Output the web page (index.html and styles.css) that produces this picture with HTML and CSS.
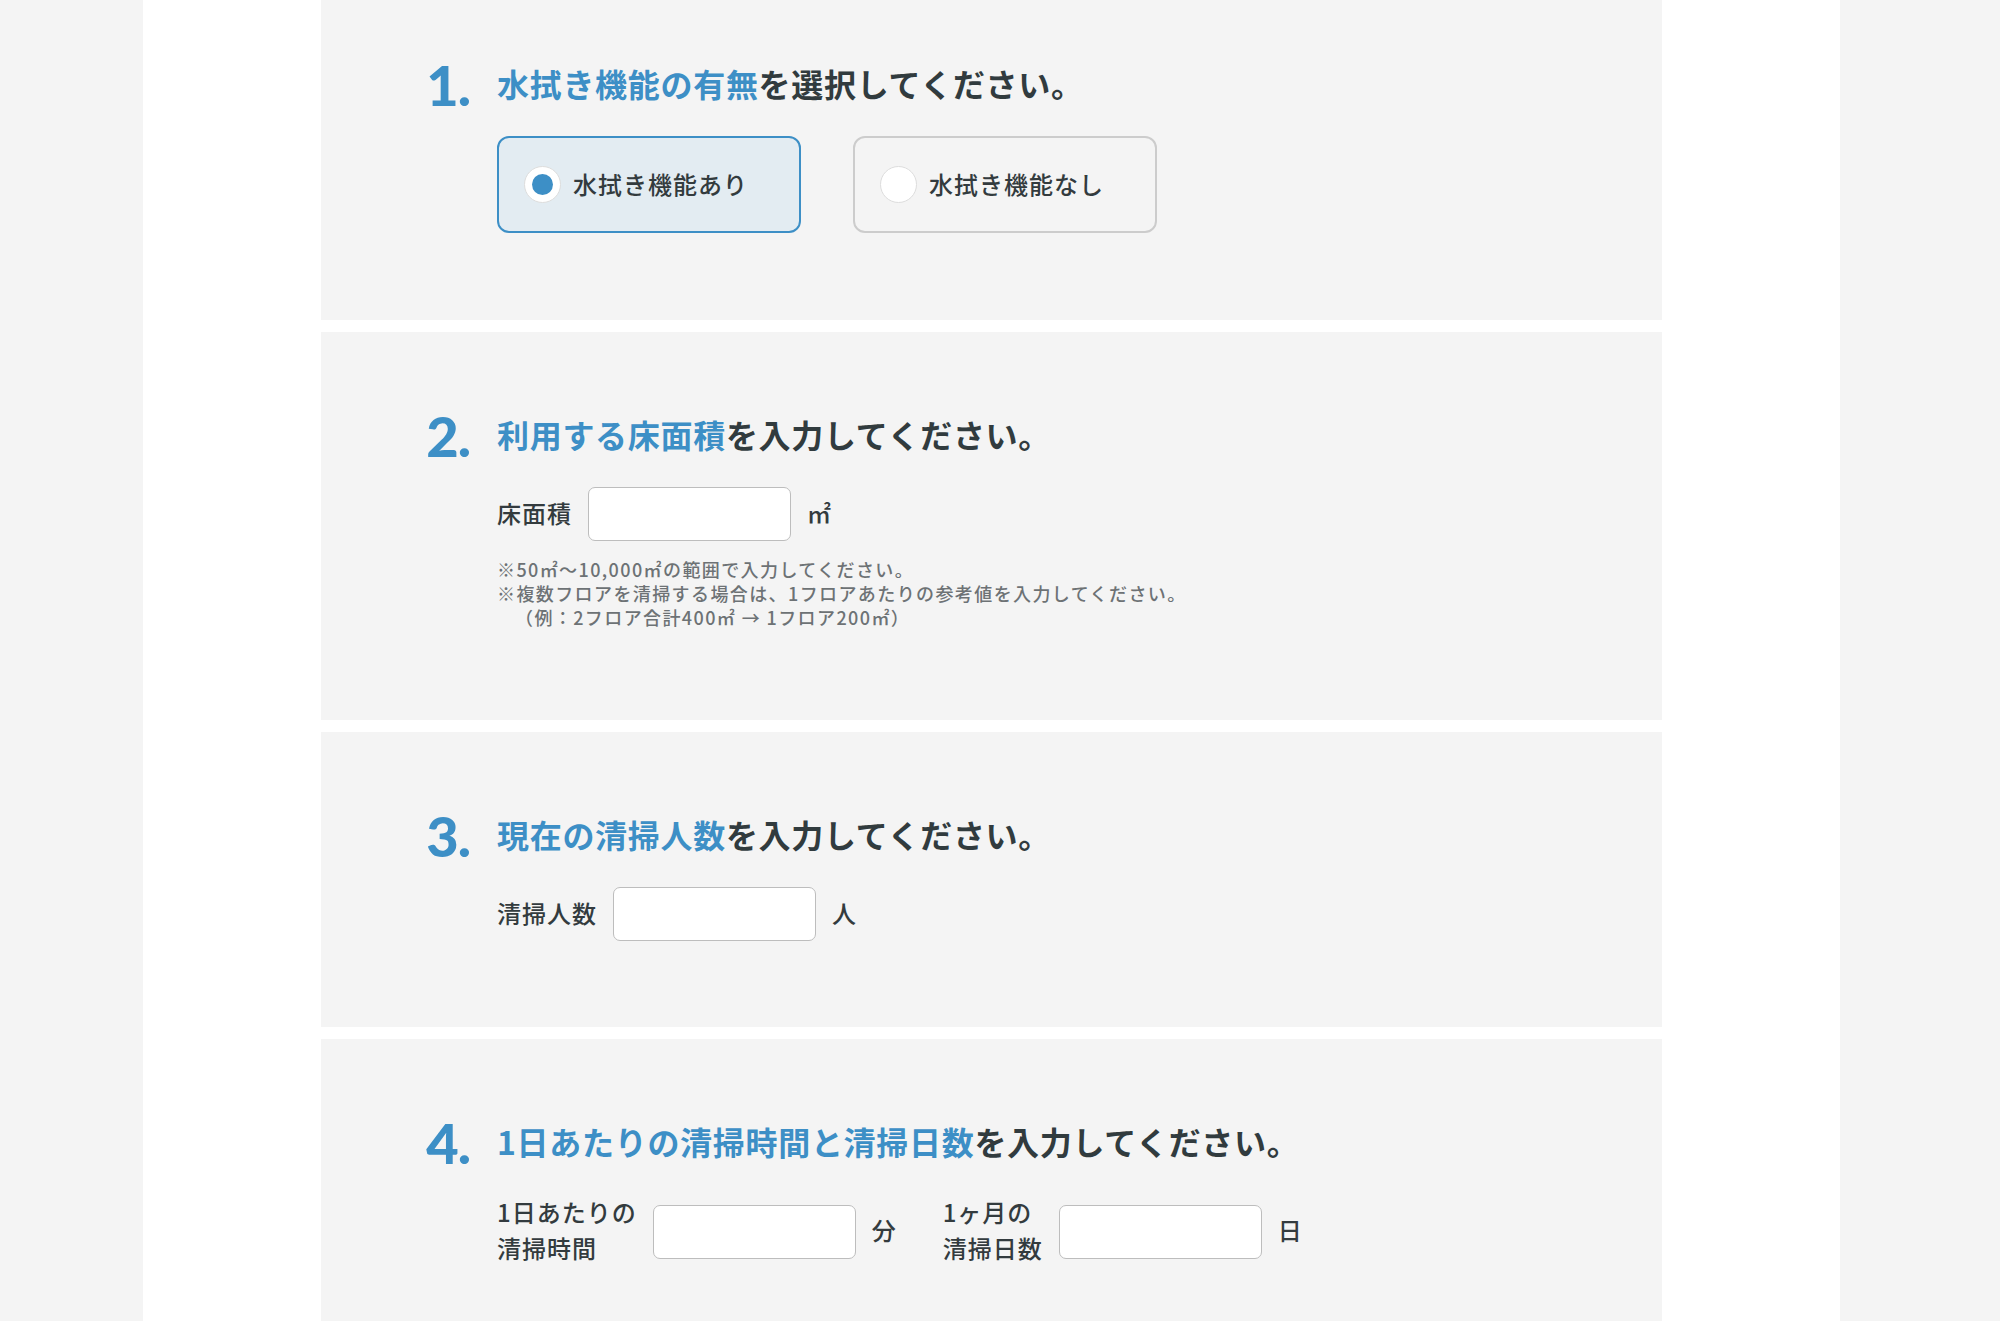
FILE: index.html
```html
<!DOCTYPE html>
<html lang="ja">
<head>
<meta charset="utf-8">
<title>清掃シミュレーション</title>
<link rel="stylesheet" href="styles.css">
</head>
<body>
<div class="page">
  <section class="card card-first">
    <div class="q-num">1.</div>
    <div class="q-body">
      <h2 class="q-title"><span class="hl">水拭き機能の有無</span>を選択してください。</h2>
      <div class="options">
        <label class="option option-on"><span class="radio"><span class="dot"></span></span><span class="opt-text">水拭き機能あり</span></label>
        <label class="option"><span class="radio"></span><span class="opt-text">水拭き機能なし</span></label>
      </div>
    </div>
  </section>

  <section class="card card-notes">
    <div class="q-num">2.</div>
    <div class="q-body">
      <h2 class="q-title"><span class="hl">利用する床面積</span>を入力してください。</h2>
      <div class="row">
        <div class="group">
          <span class="label">床面積</span>
          <span class="field"></span>
          <span class="unit">㎡</span>
        </div>
      </div>
      <div class="notes">
        <p class="note">※50㎡～10,000㎡の範囲で入力してください。</p>
        <p class="note">※複数フロアを清掃する場合は、1フロアあたりの参考値を入力してください。</p>
        <p class="note note-indent">（例：2フロア合計400㎡ → 1フロア200㎡）</p>
      </div>
    </div>
  </section>

  <section class="card">
    <div class="q-num">3.</div>
    <div class="q-body">
      <h2 class="q-title"><span class="hl">現在の清掃人数</span>を入力してください。</h2>
      <div class="row">
        <div class="group">
          <span class="label">清掃人数</span>
          <span class="field"></span>
          <span class="unit">人</span>
        </div>
      </div>
    </div>
  </section>

  <section class="card">
    <div class="q-num">4.</div>
    <div class="q-body">
      <h2 class="q-title"><span class="hl">1日あたりの清掃時間と清掃日数</span>を入力してください。</h2>
      <div class="row">
        <div class="group">
          <span class="label">1日あたりの<br>清掃時間</span>
          <span class="field"></span>
          <span class="unit">分</span>
        </div>
        <div class="group">
          <span class="label">1ヶ月の<br>清掃日数</span>
          <span class="field"></span>
          <span class="unit">日</span>
        </div>
      </div>
    </div>
  </section>
</div>
</body>
</html>
```

FILE: styles.css
```css
html, body {
  margin: 0;
  padding: 0;
}
body {
  background: #f4f4f4;
  font-family: "Noto Sans CJK JP", "Noto Sans", sans-serif;
  color: #333b3e;
}
.page {
  background: #ffffff;
  margin: 0 160px 0 143px;
  padding: 0 178px 1px;
  min-height: 1400px;
}
.card {
  background: #f4f4f4;
  display: flex;
  align-items: flex-start;
  padding: 82px 0 86px;
  margin-bottom: 12px;
}
.card-first {
  padding-top: 63px;
  padding-bottom: 87px;
}
.card-notes {
  padding-bottom: 91px;
}
.q-num {
  flex: 0 0 176px;
  box-sizing: border-box;
  padding-right: 27px;
  text-align: right;
  font-family: "Lato", "Open Sans", sans-serif;
  font-weight: 900;
  font-size: 56px;
  line-height: 40px;
  margin-top: 2px;
  letter-spacing: -1px;
  color: #3d8fc6;
}
.q-body {
  flex: 1 1 auto;
}
.q-title {
  margin: 0 0 33px;
  font-size: 32px;
  line-height: 40px;
  font-weight: 700;
  color: #313b3e;
  letter-spacing: 0.7px;
}
.hl {
  color: #3d8fc6;
}
.options {
  display: flex;
  gap: 52px;
}
.option {
  box-sizing: border-box;
  width: 304px;
  height: 97px;
  border: 2px solid #cccccc;
  border-radius: 12px;
  background: #f4f4f4;
  display: flex;
  align-items: center;
  padding-left: 25px;
}
.option-on {
  border-color: #3d8fc6;
  background: #e3ecf2;
}
.radio {
  box-sizing: border-box;
  width: 37px;
  height: 37px;
  border-radius: 50%;
  background: #ffffff;
  border: 1px solid #dddddd;
  display: flex;
  align-items: center;
  justify-content: center;
  flex-shrink: 0;
}
.dot {
  width: 21px;
  height: 21px;
  border-radius: 50%;
  background: #3d8fc6;
}
.opt-text {
  margin-left: 12px;
  font-size: 24px;
  letter-spacing: 1px;
  line-height: 36px;
  padding-bottom: 2px;
  font-weight: 500;
  color: #333b3e;
}
.row {
  display: flex;
  align-items: center;
  gap: 46px;
}
.group {
  display: flex;
  align-items: center;
  gap: 16px;
}
.label, .unit {
  font-size: 24px;
  letter-spacing: 1px;
  line-height: 36px;
  padding-bottom: 3px;
  font-weight: 500;
  color: #333b3e;
}
.field {
  box-sizing: border-box;
  display: block;
  width: 203px;
  height: 54px;
  background: #ffffff;
  border: 1px solid #bdbdbd;
  border-radius: 7px;
}
.notes {
  margin-top: 16px;
}
.note {
  margin: 0;
  font-size: 18px;
  line-height: 24px;
  letter-spacing: 1.4px;
  color: #6d7275;
  font-weight: 500;
}
.note-indent {
  padding-left: 18px;
}
```
